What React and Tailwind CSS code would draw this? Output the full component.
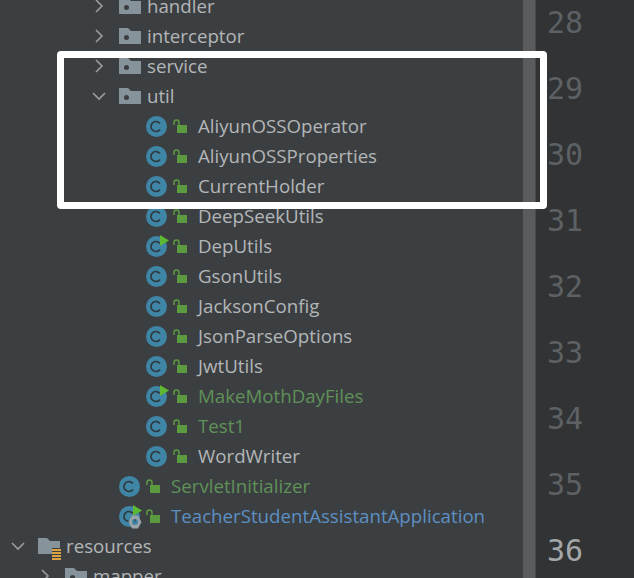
import { useState } from "react";

const folders = ["handler", "interceptor", "service", "util"]
const classes = [
  { name: "AliyunOSSOperator" },
  { name: "AliyunOSSProperties" },
  { name: "CurrentHolder" },
  { name: "DeepSeekUtils" },
  { name: "DepUtils", run: true },
  { name: "GsonUtils" },
  { name: "JacksonConfig" },
  { name: "JsonParseOptions" },
  { name: "JwtUtils" },
  { name: "MakeMothDayFiles", run: true, color: "text-[#5f9158]" },
  { name: "Test1", color: "text-[#5f9158]" },
  { name: "WordWriter" },
]
const lineNumbers = [28, 29, 30, 31, 32, 33, 34, 35, 36]

function Chevron({ open }) {
  return (
    <svg width="16" height="16" viewBox="0 0 16 16" fill="none" stroke="#9a9da0" strokeWidth="1.6">
      {open ? <path d="M2 5l6 6 6-6" /> : <path d="M5 2l6 6-6 6" />}
    </svg>
  )
}

function Folder() {
  return (
    <svg width="22" height="18" viewBox="0 0 22 18" className="shrink-0">
      <path d="M0 1h9l3 3h10v13H0z" fill="#87939a" />
      <circle cx="7.5" cy="10.5" r="2.5" fill="#3c3f41" />
    </svg>
  )
}

function ResourcesFolder() {
  return (
    <svg width="24" height="24" viewBox="0 0 24 24" className="shrink-0">
      <path d="M0 1h9l3 3h10v13H0z" fill="#87939a" />
      <path d="M14 11h10v13H14z" fill="#3c3f41" />
      <path d="M14 13h9M14 16h9M14 19h9M14 22h9" stroke="#d9a343" strokeWidth="2" />
    </svg>
  )
}

function ClassIcon({ run, gear }) {
  return (
    <div className="relative w-[21px] h-[21px] shrink-0">
      <svg width="21" height="21" viewBox="0 0 21 21">
        <circle cx="10.5" cy="10.5" r="10.5" fill="#3f86a6" />
        <path d="M14 7.6a5 5 0 1 0 0 5.8" fill="none" stroke="#2f3a40" strokeWidth="1.7" />
      </svg>
      {run && (
        <svg width="9" height="11" viewBox="0 0 9 11" className="absolute -top-[1px] left-[14px]">
          <path d="M0 0l9 5.5-9 5.5z" fill="#5fb832" />
        </svg>
      )}
      {gear && (
        <svg width="14" height="14" viewBox="0 0 14 14" className="absolute top-[9px] left-[9px]">
          <path d="M4 .5h6L13.5 7 10 13.5H4L.5 7z" fill="#9aa3aa" />
          <circle cx="7" cy="7" r="3" fill="#3f86a6" />
          <path d="M7 4v3" stroke="#2f3a40" strokeWidth="1" />
        </svg>
      )}
    </div>
  )
}

function Lock() {
  return (
    <svg width="14" height="14" viewBox="0 0 14 14" className="shrink-0">
      <path d="M1 6V3.5a2.5 2.5 0 0 1 5 0V6" fill="none" stroke="#5c9a40" strokeWidth="1.5" />
      <path d="M4 6h10v8H4z" fill="#5c9a40" />
    </svg>
  )
}

function FolderRow({ name, open }) {
  return (
    <div className="h-[30px] flex items-center pl-[91px]">
      <div className="w-[16px] flex justify-center"><Chevron open={open} /></div>
      <div className="ml-[12px]"><Folder /></div>
      <span className="ml-[6px] text-[#b3b6b8]">{name}</span>
    </div>
  )
}

export default function App() {
  return (
    <div className="relative w-[634px] h-[578px] overflow-hidden flex bg-[#3c3f41] text-[18.7px]" style={{ fontFamily: '"Open Sans", sans-serif' }}>
      {/* Project tree */}
      <div className="w-[523px] shrink-0 -mt-[9px]">
        {folders.map((f) => (
          <FolderRow key={f} name={f} open={f === "util"} />
        ))}

        {classes.map((c) => (
          <div key={c.name} className="h-[30px] flex items-center pl-[146px]">
            <ClassIcon run={c.run} />
            <div className="ml-[6px]"><Lock /></div>
            <span className={`ml-[11px] ${c.color || "text-[#b3b6b8]"}`}>{c.name}</span>
          </div>
        ))}

        <div className="h-[30px] flex items-center pl-[119px]">
          <ClassIcon />
          <div className="ml-[6px]"><Lock /></div>
          <span className="ml-[11px] text-[#5f9158]">ServletInitializer</span>
        </div>
        <div className="h-[30px] flex items-center pl-[119px]">
          <ClassIcon run gear />
          <div className="ml-[6px]"><Lock /></div>
          <span className="ml-[11px] text-[#5c8fc2]">TeacherStudentAssistantApplication</span>
        </div>

        <div className="h-[30px] flex items-center pl-[10px]">
          <div className="w-[16px] flex justify-center"><Chevron open /></div>
          <div className="ml-[12px] mt-[5px]"><ResourcesFolder /></div>
          <span className="ml-[4px] text-[#b3b6b8]">resources</span>
        </div>
        <div className="h-[30px] flex items-center pl-[37px]">
          <div className="w-[16px] flex justify-center"><Chevron /></div>
          <div className="ml-[12px]"><Folder /></div>
          <span className="ml-[6px] text-[#b3b6b8]">mapper</span>
        </div>
      </div>

      {/* Scrollbar */}
      <div className="w-[12px] shrink-0 bg-[#5a5b5c]"></div>
      <div className="w-[1px] shrink-0 bg-[#474a4c]"></div>

      {/* Line numbers */}
      <div className="flex-1 bg-[#313335] -mt-[10px] pl-[11px] text-[30px] leading-[66px] text-[#5d6164]" style={{ fontFamily: '"DejaVu Sans Mono", monospace' }}>
        {lineNumbers.map((n) => (
          <div key={n} className={n === 36 ? "text-[#a4a7a9]" : ""}>{n}</div>
        ))}
      </div>

      {/* Highlight box drawn over the screenshot */}
      <div className="absolute left-[57px] top-[51px] w-[490px] h-[158px] border-[7px] border-white rounded-[4px]"></div>
    </div>
  )
}
